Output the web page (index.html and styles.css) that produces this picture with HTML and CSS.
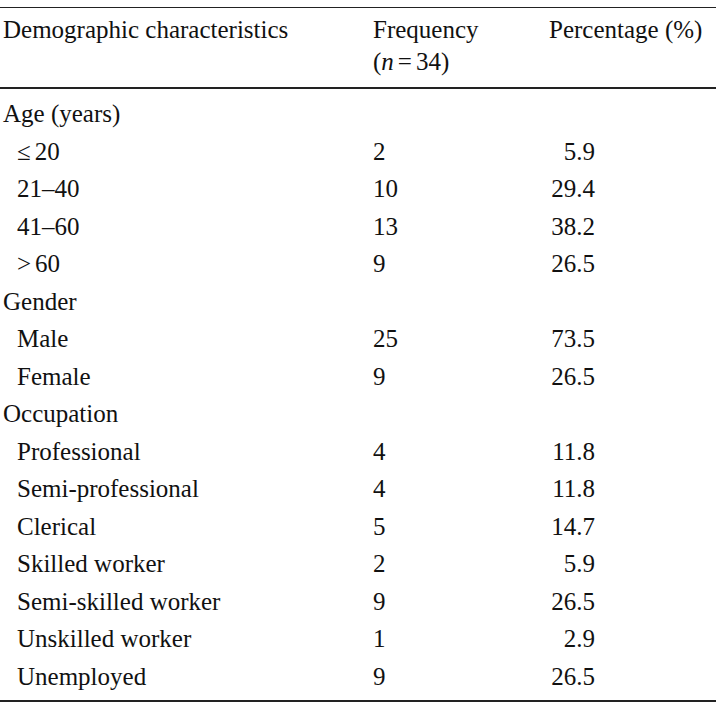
FILE: index.html
```html
<!DOCTYPE html>
<html lang="en">
<head>
<meta charset="utf-8">
<title>Demographic characteristics</title>
<link rel="stylesheet" href="styles.css">
</head>
<body>
<table class="demo">
  <colgroup>
    <col class="col1">
    <col class="col2">
    <col class="col3">
  </colgroup>
  <thead>
    <tr>
      <th>Demographic characteristics</th>
      <th>Frequency<br>(<i>n</i><span class="op">=</span>34)</th>
      <th>Percentage (%)</th>
    </tr>
  </thead>
  <tbody>
    <tr class="first"><td>Age (years)</td><td></td><td></td></tr>
    <tr><td class="sub"><span class="rel">&le;</span>20</td><td>2</td><td><span class="num">5.9</span></td></tr>
    <tr><td class="sub">21–40</td><td>10</td><td><span class="num">29.4</span></td></tr>
    <tr><td class="sub">41–60</td><td>13</td><td><span class="num">38.2</span></td></tr>
    <tr><td class="sub"><span class="rel">&gt;</span>60</td><td>9</td><td><span class="num">26.5</span></td></tr>
    <tr><td>Gender</td><td></td><td></td></tr>
    <tr><td class="sub">Male</td><td>25</td><td><span class="num">73.5</span></td></tr>
    <tr><td class="sub">Female</td><td>9</td><td><span class="num">26.5</span></td></tr>
    <tr><td>Occupation</td><td></td><td></td></tr>
    <tr><td class="sub">Professional</td><td>4</td><td><span class="num">11.8</span></td></tr>
    <tr><td class="sub">Semi-professional</td><td>4</td><td><span class="num">11.8</span></td></tr>
    <tr><td class="sub">Clerical</td><td>5</td><td><span class="num">14.7</span></td></tr>
    <tr><td class="sub">Skilled worker</td><td>2</td><td><span class="num">5.9</span></td></tr>
    <tr><td class="sub">Semi-skilled worker</td><td>9</td><td><span class="num">26.5</span></td></tr>
    <tr><td class="sub">Unskilled worker</td><td>1</td><td><span class="num">2.9</span></td></tr>
    <tr class="last"><td class="sub">Unemployed</td><td>9</td><td><span class="num">26.5</span></td></tr>
  </tbody>
</table>
</body>
</html>
```
FILE: styles.css
```css
html, body {
  margin: 0;
  padding: 0;
  background: #ffffff;
}

body {
  font-family: "Liberation Serif", "Times New Roman", serif;
  font-size: 25px;
  color: #111111;
}

.demo {
  margin-top: 7px;
  width: 716px;
  table-layout: fixed;
  border-collapse: collapse;
  border-top: 1px solid #222222;
  border-bottom: 2px solid #222222;
}

.col1 { width: 370px; }
.col2 { width: 176px; }
.col3 { width: 170px; }

.demo th {
  font-weight: normal;
  text-align: left;
  vertical-align: top;
  line-height: 32px;
  padding: 6px 0 9px 3px;
  border-bottom: 2px solid #222222;
  white-space: nowrap;
}

.demo td {
  padding: 0 0 0 3px;
  line-height: 37.5px;
  height: 37.5px;
  vertical-align: middle;
  white-space: nowrap;
}

.demo td.sub {
  padding-left: 17px;
}

.rel {
  margin-right: 4px;
}

.op {
  margin: 0 4px;
}

.num {
  display: inline-block;
  width: 46px;
  text-align: right;
}

.demo tr.first td {
  padding-top: 6px;
}

.demo tr.last td {
  padding-bottom: 5px;
}
```
